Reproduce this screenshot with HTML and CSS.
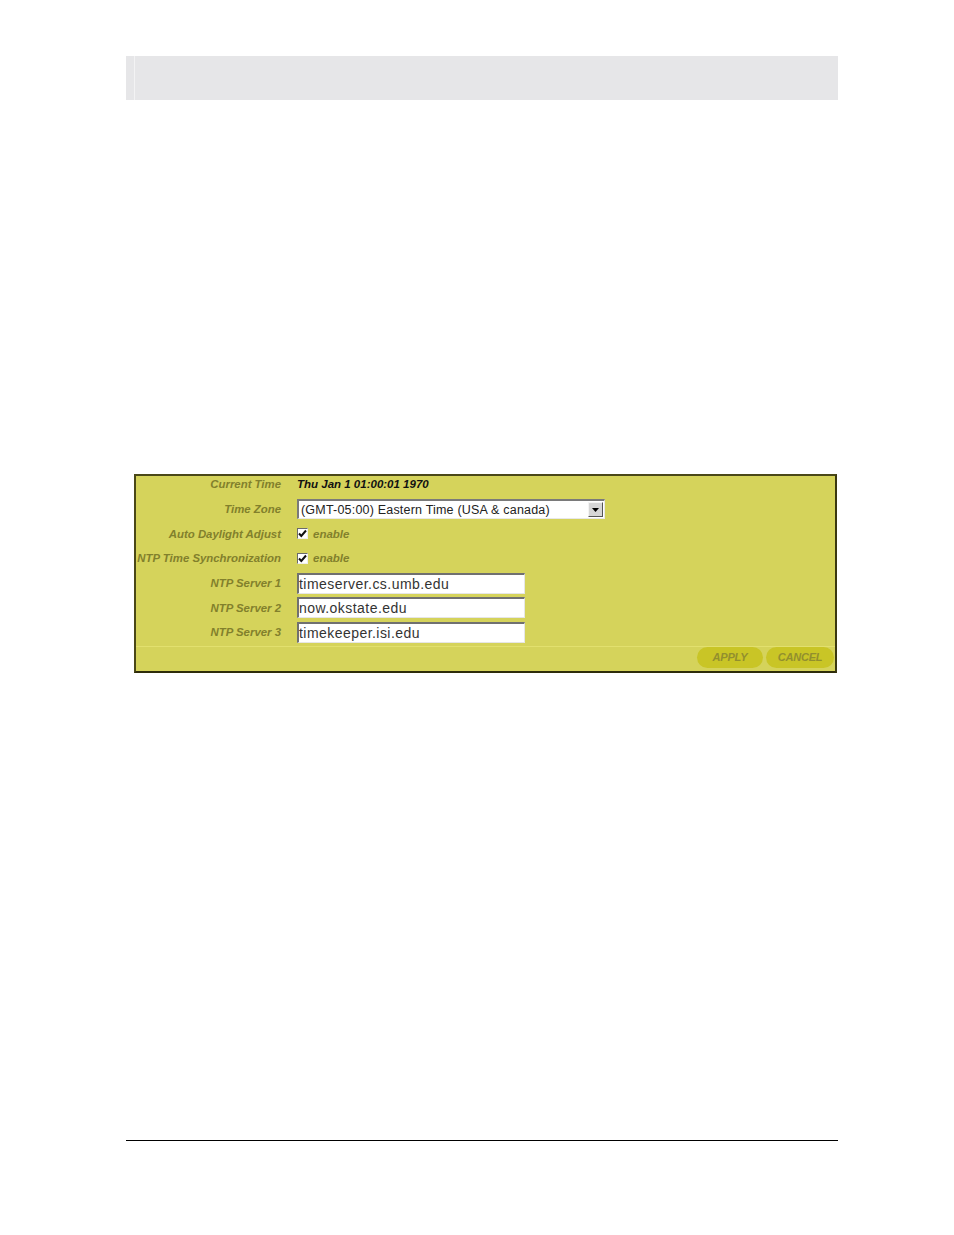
FILE: index.html
```html
<!DOCTYPE html>
<html>
<head>
<meta charset="utf-8">
<link rel="stylesheet" href="styles.css">
</head>
<body>
<div class="page">
  <div class="header"><div class="header-inner"></div></div>
  <div class="panel">
    <div class="row row-first">
      <div class="label">Current Time</div>
      <div class="value time">Thu Jan 1 01:00:01 1970</div>
    </div>
    <div class="row">
      <div class="label">Time Zone</div>
      <div class="value">
        <div class="select">
          <span class="select-text">(GMT-05:00) Eastern Time (USA &amp; canada)</span>
          <span class="select-arrow"><svg width="7" height="4" viewBox="0 0 7 4"><path d="M0 0H7L3.5 4Z" fill="#000"/></svg></span>
        </div>
      </div>
    </div>
    <div class="row">
      <div class="label">Auto Daylight Adjust</div>
      <div class="value check-wrap">
        <span class="checkbox"><svg width="9" height="9" viewBox="0 0 9 9"><path d="M1 4.5L3.3 7L8 1.5" fill="none" stroke="#111" stroke-width="2"/></svg></span>
        <span class="check-label">enable</span>
      </div>
    </div>
    <div class="row">
      <div class="label">NTP Time Synchronization</div>
      <div class="value check-wrap">
        <span class="checkbox"><svg width="9" height="9" viewBox="0 0 9 9"><path d="M1 4.5L3.3 7L8 1.5" fill="none" stroke="#111" stroke-width="2"/></svg></span>
        <span class="check-label">enable</span>
      </div>
    </div>
    <div class="row">
      <div class="label">NTP Server 1</div>
      <div class="value"><div class="input">timeserver.cs.umb.edu</div></div>
    </div>
    <div class="row">
      <div class="label">NTP Server 2</div>
      <div class="value"><div class="input">now.okstate.edu</div></div>
    </div>
    <div class="row">
      <div class="label">NTP Server 3</div>
      <div class="value"><div class="input">timekeeper.isi.edu</div></div>
    </div>
    <div class="button-row">
      <span class="btn btn-apply">APPLY</span>
      <span class="btn btn-cancel">CANCEL</span>
    </div>
  </div>
  <div class="footer-rule"></div>
</div>
</body>
</html>
```
FILE: styles.css
```css
html, body {
  margin: 0;
  padding: 0;
  background: #ffffff;
}
body {
  font-family: "Liberation Sans", Arial, sans-serif;
}
.page {
  width: 712px;
  margin-left: 126px;
  padding-top: 56px;
}
.header {
  height: 44px;
  background: #e6e6e8;
  padding-left: 8px;
  box-sizing: border-box;
}
.header-inner {
  height: 100%;
  border-left: 1px solid #f3f3f4;
}
.panel {
  margin-top: 374px;
  margin-left: 8px;
  width: 703px;
  box-sizing: border-box;
  background: #d5d35b;
  border-top: 2px solid #4a4818;
  border-left: 2px solid #4a4818;
  border-right: 2px solid #3a3810;
  border-bottom: 2px solid #2e2c0a;
}
.row {
  display: grid;
  grid-template-columns: 145px 1fr;
  column-gap: 16px;
  align-items: center;
  height: 24.6px;
}
.row-first {
  height: 21px;
  align-items: start;
  padding-top: 1px;
  box-sizing: border-box;
}
.label {
  text-align: right;
  font-size: 11.4px;
  line-height: 14px;
  font-weight: bold;
  font-style: italic;
  color: #82802c;
  letter-spacing: 0;
  white-space: nowrap;
}
.value {
  display: flex;
  align-items: center;
}
.time {
  font-size: 11.5px;
  line-height: 14px;
  font-weight: bold;
  font-style: italic;
  color: #111;
  letter-spacing: 0;
}
.select {
  width: 308px;
  height: 20px;
  box-sizing: border-box;
  background: #fff;
  border-top: 2px solid #7a7a7a;
  border-left: 2px solid #7a7a7a;
  border-right: 1px solid #e8e8e8;
  border-bottom: 1px solid #e8e8e8;
  display: flex;
  align-items: center;
  justify-content: space-between;
  padding-left: 2px;
  padding-right: 1px;
}
.select-text {
  font-size: 12.5px;
  color: #222;
  white-space: nowrap;
  letter-spacing: 0.2px;
}
.select-arrow {
  width: 15px;
  height: 15px;
  box-sizing: border-box;
  background: #d6d6d6;
  border-top: 1px solid #f4f4f4;
  border-left: 1px solid #f4f4f4;
  border-right: 1px solid #555;
  border-bottom: 1px solid #555;
  display: flex;
  align-items: center;
  justify-content: center;
}
.check-wrap {
  gap: 5px;
}
.checkbox {
  width: 11px;
  height: 11px;
  box-sizing: border-box;
  background: #fff;
  border-top: 1px solid #6a6a6a;
  border-left: 1px solid #6a6a6a;
  border-right: 1px solid #eee;
  border-bottom: 1px solid #eee;
  display: flex;
  align-items: center;
  justify-content: center;
}
.check-label {
  font-size: 11.5px;
  font-weight: bold;
  font-style: italic;
  color: #82802c;
  letter-spacing: 0;
}
.input {
  width: 228px;
  height: 21px;
  box-sizing: border-box;
  background: #fff;
  border-top: 2px solid #707070;
  border-left: 2px solid #707070;
  border-right: 1px solid #e6e6e6;
  border-bottom: 1px solid #e6e6e6;
  font-size: 14px;
  line-height: 18px;
  color: #333;
  padding-left: 0;
  white-space: nowrap;
  letter-spacing: 0.45px;
}
.button-row {
  margin-top: 1px;
  border-top: 1px solid #e2e06e;
  padding-bottom: 3px;
  padding-right: 1px;
  display: flex;
  justify-content: flex-end;
  gap: 3px;
}
.btn {
  height: 21px;
  border-radius: 11px;
  background: #c9c526;
  color: #928f2e;
  font-size: 11px;
  font-weight: bold;
  font-style: italic;
  letter-spacing: -0.2px;
  display: flex;
  align-items: center;
  justify-content: center;
}
.btn-apply {
  width: 66px;
}
.btn-cancel {
  width: 68px;
}
.footer-rule {
  margin-top: 467px;
  height: 1px;
  background: #000;
}
```
